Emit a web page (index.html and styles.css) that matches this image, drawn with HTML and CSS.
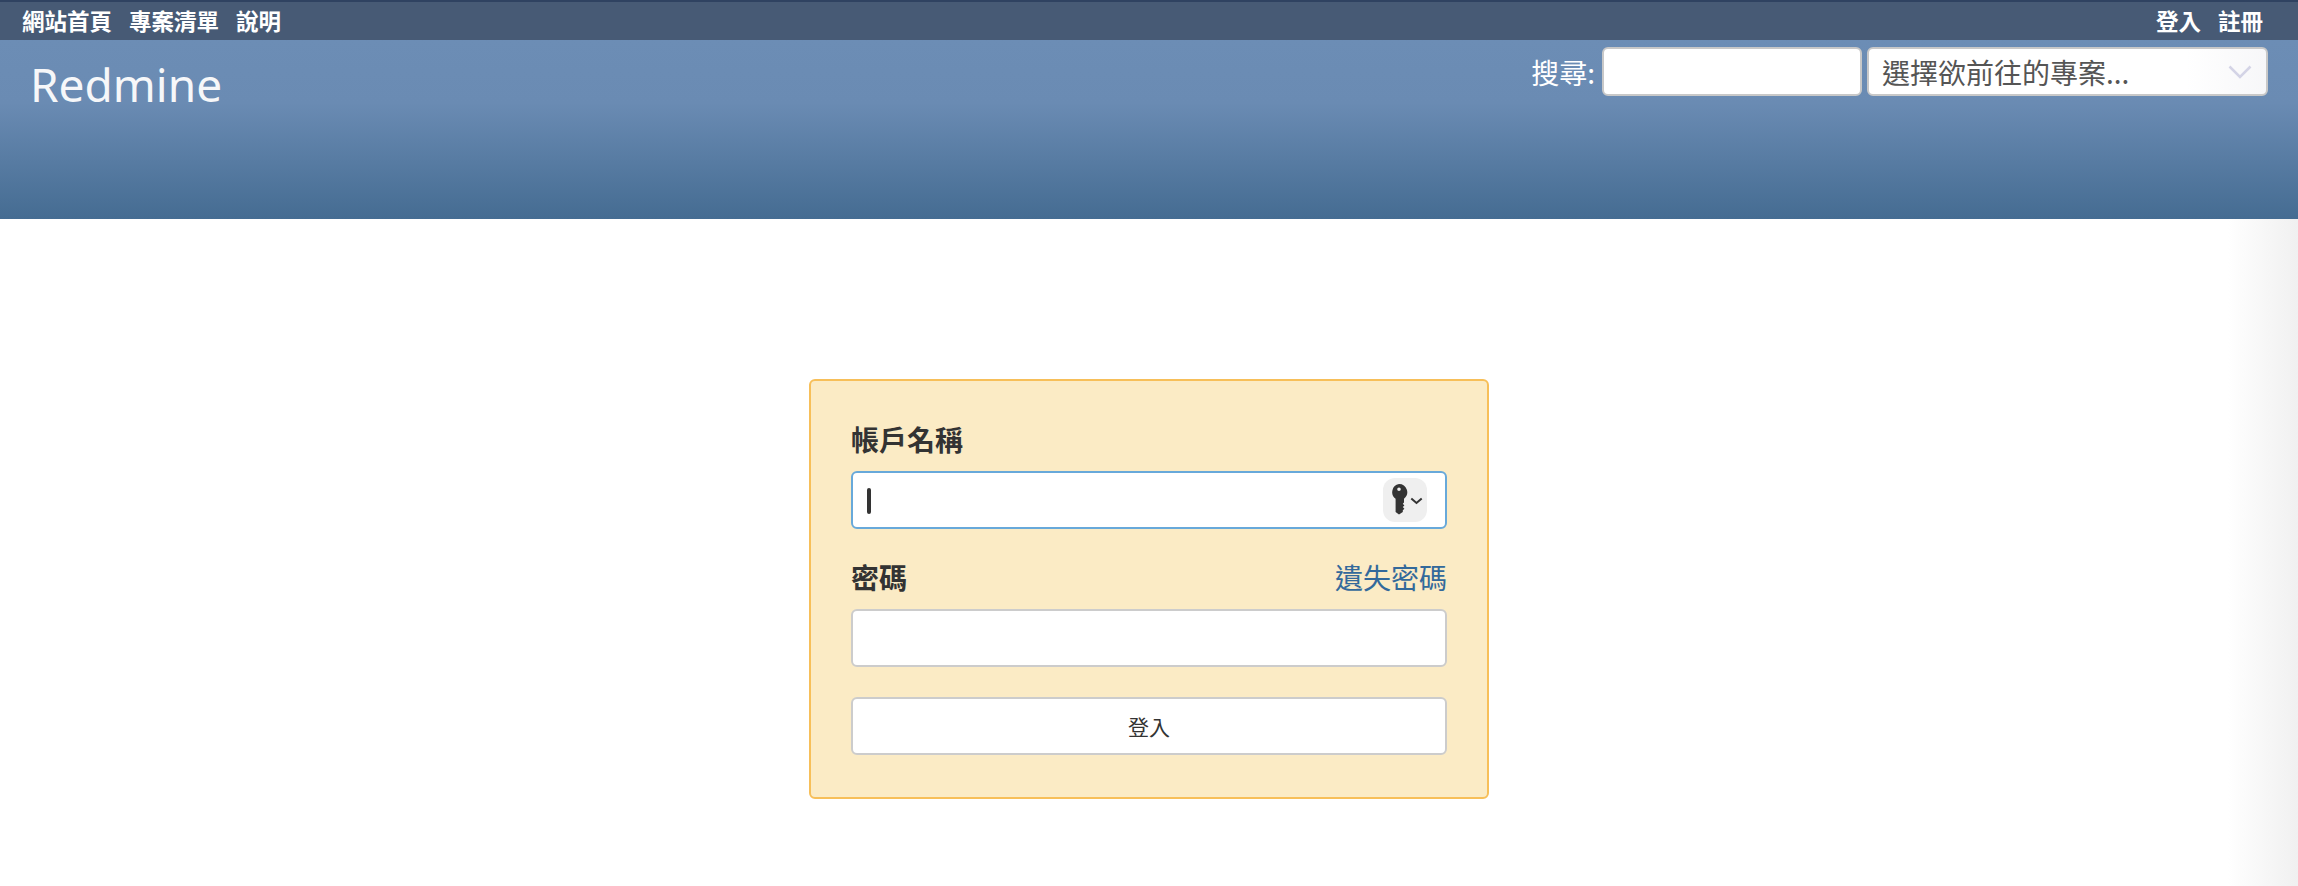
FILE: index.html
```html
<!DOCTYPE html>
<html lang="zh-Hant">
<head>
<meta charset="utf-8">
<title>Redmine</title>
<link rel="stylesheet" href="styles.css">
</head>
<body>
<nav class="top-menu">
  <ul class="menu">
    <li><a href="#">網站首頁</a></li>
    <li><a href="#">專案清單</a></li>
    <li><a href="#">說明</a></li>
  </ul>
  <ul class="menu">
    <li><a href="#">登入</a></li>
    <li><a href="#">註冊</a></li>
  </ul>
</nav>
<header class="header">
  <h1 class="brand">Redmine</h1>
  <div class="quick">
    <label class="quick-label">搜尋:</label>
    <input class="quick-input" type="text">
    <div class="jump"><span>選擇欲前往的專案...</span>
      <svg class="jump-arrow" width="24" height="14" viewBox="0 0 24 14"><path d="M1.500 1.500 12 12 22.500 1.500" fill="none" stroke="#d4d4e6" stroke-width="2.500"/></svg>
    </div>
  </div>
</header>
<main class="main">
  <div class="scroll-shade"></div>
  <form class="card">
    <label class="label">帳戶名稱</label>
    <div class="field focused">
      <span class="caret"></span>
      <svg class="chip" width="44" height="44" viewBox="0 0 44 44">
        <rect width="44" height="44" rx="12" fill="#efefef"/>
        <path fill="#333" fill-rule="evenodd" d="M16 6a8.200 8.200 0 0 1 5 14.700V24.500l-1.200 1.300 1.600 1.700-1.600 1.500 1.600 1.700-1.600 1.500v1.800L16 36.500l-3.400-2.500V20.700A8.200 8.200 0 0 1 16 6Zm0 3.400a1.800 1.800 0 1 0 0 3.600 1.800 1.800 0 0 0 0-3.600Z"/>
        <path d="M28.300 20.500 33.500 25l5.200-4.500" fill="none" stroke="#333" stroke-width="2"/>
      </svg>
    </div>
    <div class="label-row">
      <label class="label">密碼</label>
      <a class="lost" href="#">遺失密碼</a>
    </div>
    <div class="field"></div>
    <button class="submit" type="button">登入</button>
  </form>
</main>
</body>
</html>
```
FILE: styles.css
```css
* { box-sizing: border-box; }
html, body { margin: 0; height: 100%; }
body {
  background: #fff;
  color: #333;
  font-family: "Noto Sans", "Noto Sans CJK TC", sans-serif;
  overflow: hidden;
}
.top-menu {
  height: 40px;
  background: #475a75;
  border-top: 2px solid #2f4261;
  display: flex;
  justify-content: space-between;
  padding: 0 6px 0 22px;
}
.menu {
  list-style: none;
  margin: 0;
  padding: 0;
  display: flex;
  gap: 17px;
}
.menu a {
  color: #fff;
  font: bold 22.500px/36px "Noto Sans CJK TC", sans-serif;
  text-decoration: none;
}
.menu:last-child { padding-right: 29px; }
.header {
  height: 179px;
  background: linear-gradient(180deg, #6c8db5 0%, #6a8bb3 35%, #456c92 100%);
  display: flex;
  justify-content: space-between;
  align-items: flex-start;
  padding: 0 30px 0 30px;
}
.brand {
  margin: 12px 0 0;
  color: #f6f7f9;
  font: 400 46px/1.4 "Noto Sans", "Noto Sans CJK TC", sans-serif;
}
.quick {
  display: flex;
  align-items: center;
  margin-top: 7px;
}
.quick-label {
  color: #fff;
  font: 28px/48px "Noto Sans CJK TC", sans-serif;
  margin-right: 7px;
}
.quick-input {
  width: 260px;
  height: 49px;
  background: #fff;
  border: 2px solid #c8c8c8;
  border-radius: 6px;
  margin-right: 5px;
  padding: 0;
}
.jump {
  width: 401px;
  height: 49px;
  background: linear-gradient(90deg, #fff 80%, #f7f7f9 100%);
  border: 2px solid #c8c8c8;
  border-radius: 6px;
  display: flex;
  justify-content: space-between;
  align-items: center;
  padding: 0 14px 0 13px;
  color: #555;
  font: 28px/1 "Noto Sans CJK TC", sans-serif;
}
.main {
  position: relative;
  height: 667px;
  padding-top: 160px;
  display: flex;
  justify-content: center;
}
.scroll-shade {
  position: absolute;
  top: 0;
  right: 0;
  bottom: 0;
  width: 70px;
  background: linear-gradient(90deg, rgba(240,240,240,0) 0%, #f0f0f0 100%);
}
.card {
  width: 680px;
  height: 420px;
  background: #fbebc5;
  border: 2px solid #f7bf59;
  border-radius: 6px;
  padding: 40px 40px 0 40px;
  display: flex;
  flex-direction: column;
}
.label {
  display: block;
  font: bold 28px/36px "Noto Sans CJK TC", sans-serif;
  color: #333;
}
.label-row {
  display: flex;
  justify-content: space-between;
  align-items: center;
  margin-top: 30px;
  padding-bottom: 14px;
}
.lost {
  color: #33699b;
  font: 28px/36px "Noto Sans CJK TC", sans-serif;
  text-decoration: none;
}
.field {
  position: relative;
  height: 58px;
  background: #fff;
  border: 2px solid #cccccc;
  border-radius: 6px;
}
.focused {
  border-color: #68a9da;
  margin-top: 14px;
}
.caret {
  position: absolute;
  left: 14px;
  top: 15px;
  width: 4px;
  height: 26px;
  background: #333;
  border-radius: 2px;
}
.chip {
  position: absolute;
  right: 18px;
  top: 5px;
}
.submit {
  margin-top: 30px;
  height: 58px;
  width: 100%;
  background: #fff;
  border: 2px solid #cccccc;
  border-radius: 6px;
  color: #333;
  font: 21px/1 "Noto Sans CJK TC", sans-serif;
  padding: 0;
}
```
